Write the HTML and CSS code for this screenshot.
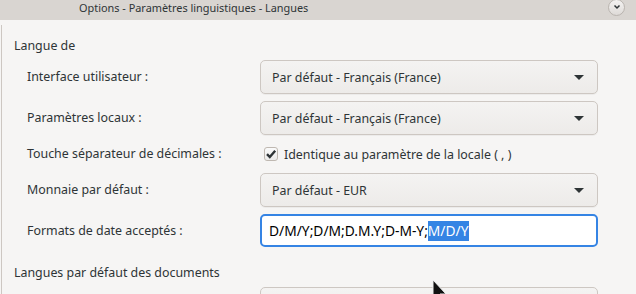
FILE: index.html
```html
<!DOCTYPE html>
<html lang="fr">
<head>
    <meta charset="UTF-8">
    <title>Options - Paramètres linguistiques - Langues</title>
    <link rel="stylesheet" href="styles.css">
</head>
<body>

    <header class="titlebar">
        <span class="title">Options - Paramètres linguistiques - Langues</span>
        <span class="title-btn">
            <svg width="10" height="10" viewBox="0 0 10 10"><path d="M2.5 3.5 L5 6 L7.5 3.5" fill="none" stroke="#2e3436" stroke-width="1.5"/></svg>
        </span>
    </header>

    <main class="frame">
        <h2 class="section">Langue de</h2>

        <div class="form">
            <label class="label">Interface utilisateur :</label>
            <div class="combo">
                <span>Par défaut - Français (France)</span>
                <span class="arrow"></span>
            </div>

            <label class="label">Paramètres locaux :</label>
            <div class="combo">
                <span>Par défaut - Français (France)</span>
                <span class="arrow"></span>
            </div>

            <label class="label">Touche séparateur de décimales :</label>
            <div class="check-row">
                <span class="checkbox">
                    <svg width="12" height="12" viewBox="0 0 12 12"><path d="M2 6.2 L4.8 9 L10.2 2.8" fill="none" stroke="#2e3436" stroke-width="2.4"/></svg>
                </span>
                <span>Identique au paramètre de la locale ( , )</span>
            </div>

            <label class="label">Monnaie par défaut :</label>
            <div class="combo">
                <span>Par défaut - EUR</span>
                <span class="arrow"></span>
            </div>

            <label class="label">Formats de date acceptés :</label>
            <div class="entry">D/M/Y;D/M;D.M.Y;D-M-Y;<span class="selected">M/D/Y</span></div>
        </div>

        <h2 class="section section-docs">Langues par défaut des documents</h2>

        <div class="form">
            <span></span>
            <div class="combo"></div>
        </div>
    </main>

    <svg class="cursor" width="16" height="24" viewBox="0 0 16 24">
        <path d="M1 1 L1 20 L5 16 L8 23 L11 22 L8 15 L14 15 Z" fill="#111" stroke="#eee" stroke-width="1"/>
    </svg>

</body>
</html>
```

FILE: styles.css
```css
body {
    margin: 0;
    height: 294px;
    overflow: hidden;
    background: #f6f5f4;
    font-family: 'Noto Sans', sans-serif;
    font-size: 12.4px;
    color: #2e3436;
    position: relative;
}

.titlebar {
    height: 20px;
    background: #d9d5d1;
    display: flex;
    align-items: center;
    justify-content: space-between;
    padding: 0 11px 0 79px;
    font-size: 10.9px;
    color: #2e3436;
}

.title {
    margin-top: -6px;
}

.title-btn {
    width: 17px;
    height: 17px;
    border-radius: 50%;
    background: linear-gradient(#f4f3f2, #dedad7);
    border: 1px solid #b9b4af;
    box-sizing: border-box;
    display: flex;
    align-items: center;
    justify-content: center;
    margin-top: -6px;
}

.frame {
    margin: 5px 0 0 1px;
    border-left: 1px solid #cdc7c2;
    padding: 12px 0 0 12px;
    min-height: 260px;
}

.section {
    margin: 0;
    font-size: 12.4px;
    font-weight: normal;
    line-height: 18px;
}

.section-docs {
    margin-top: 17px;
}

.form {
    display: grid;
    grid-template-columns: 233px 338px;
    row-gap: 7px;
    margin: 5px 0 0 13px;
    align-items: center;
}

.label {
    line-height: 18px;
}

.combo {
    height: 34px;
    box-sizing: border-box;
    border: 1px solid #cdc7c2;
    border-radius: 5px;
    background: linear-gradient(#f4f3f2, #edebe9);
    display: flex;
    align-items: center;
    justify-content: space-between;
    padding: 0 13px 0 11px;
    box-shadow: 0 1px 0 rgba(0, 0, 0, 0.04);
}

.arrow {
    width: 0;
    height: 0;
    border-left: 5px solid transparent;
    border-right: 5px solid transparent;
    border-top: 5px solid #2e3436;
}

.check-row {
    height: 24px;
    display: flex;
    align-items: center;
    gap: 6px;
    padding-left: 4px;
}

.checkbox {
    width: 14px;
    height: 14px;
    box-sizing: border-box;
    border: 1px solid #bfb8b1;
    border-radius: 3px;
    background: linear-gradient(#fafafa, #ecebea);
    display: flex;
    align-items: center;
    justify-content: center;
}

.entry {
    height: 33px;
    box-sizing: border-box;
    border: 2px solid #3584e4;
    border-radius: 5px;
    background: #fff;
    display: flex;
    align-items: center;
    padding: 0 7px;
    font-size: 13.8px;
    color: #000;
}

.selected {
    background: #3584e4;
    color: #fff;
    line-height: 20px;
}

.cursor {
    position: absolute;
    left: 432px;
    top: 279px;
}
```
